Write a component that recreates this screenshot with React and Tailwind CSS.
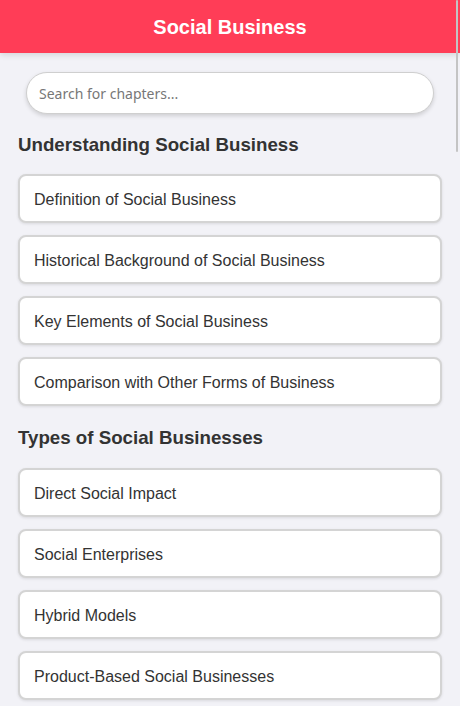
const sections = [
  {
    title: "Understanding Social Business",
    headingClass: "mt-5 mb-[18px]",
    chapters: [
      "Definition of Social Business",
      "Historical Background of Social Business",
      "Key Elements of Social Business",
      "Comparison with Other Forms of Business",
    ],
  },
  {
    title: "Types of Social Businesses",
    headingClass: "mt-[21px] mb-[19px]",
    chapters: [
      "Direct Social Impact",
      "Social Enterprises",
      "Hybrid Models",
      "Product-Based Social Businesses",
    ],
  },
];

export default function App() {
  return (
    <div
      className="relative h-[706px] w-[460px] overflow-hidden bg-[#f2f2f7]"
      style={{ fontFamily: '"Liberation Sans", Arial, sans-serif' }}
    >
      {/* HEADER */}
      <header className="relative z-10 flex h-[53px] items-center justify-center bg-[#ff3d57] shadow-[0_2px_6px_rgba(0,0,0,0.12)]">
        <h1 className="text-[20px] font-bold text-white">Social Business</h1>
      </header>

      <main className="px-[18px]">
        {/* SEARCH */}
        <div className="mx-2 mt-[19px]">
          <input
            type="text"
            placeholder="Search for chapters..."
            className="h-[42px] w-full rounded-full border border-[#cfcfcf] bg-white px-3 text-[14px] text-[#333] shadow-[0_2px_4px_rgba(0,0,0,0.15)] outline-none placeholder:text-[#777]"
            style={{ fontFamily: '"Noto Sans", "Open Sans", sans-serif' }}
          />
        </div>

        {/* SECTIONS */}
        {sections.map((section) => (
          <section key={section.title}>
            <h3
              className={`${section.headingClass} text-[18.72px] leading-[22px] font-bold text-[#333]`}
            >
              {section.title}
            </h3>
            <div className="flex flex-col gap-3">
              {section.chapters.map((chapter) => (
                <div
                  key={chapter}
                  className="rounded-lg border-2 border-[#d4d4d4] bg-white px-[14px] pt-[14px] pb-[12px] text-[16px] leading-[19px] text-[#333] shadow-[0_1px_3px_rgba(0,0,0,0.1)]"
                >
                  {chapter}
                </div>
              ))}
            </div>
          </section>
        ))}
      </main>

      {/* scrollbar thumb */}
      <div className="absolute top-0 left-[456px] z-20 h-[152px] w-[2px] rounded-full bg-[#c4c4c4]" />
    </div>
  );
}
